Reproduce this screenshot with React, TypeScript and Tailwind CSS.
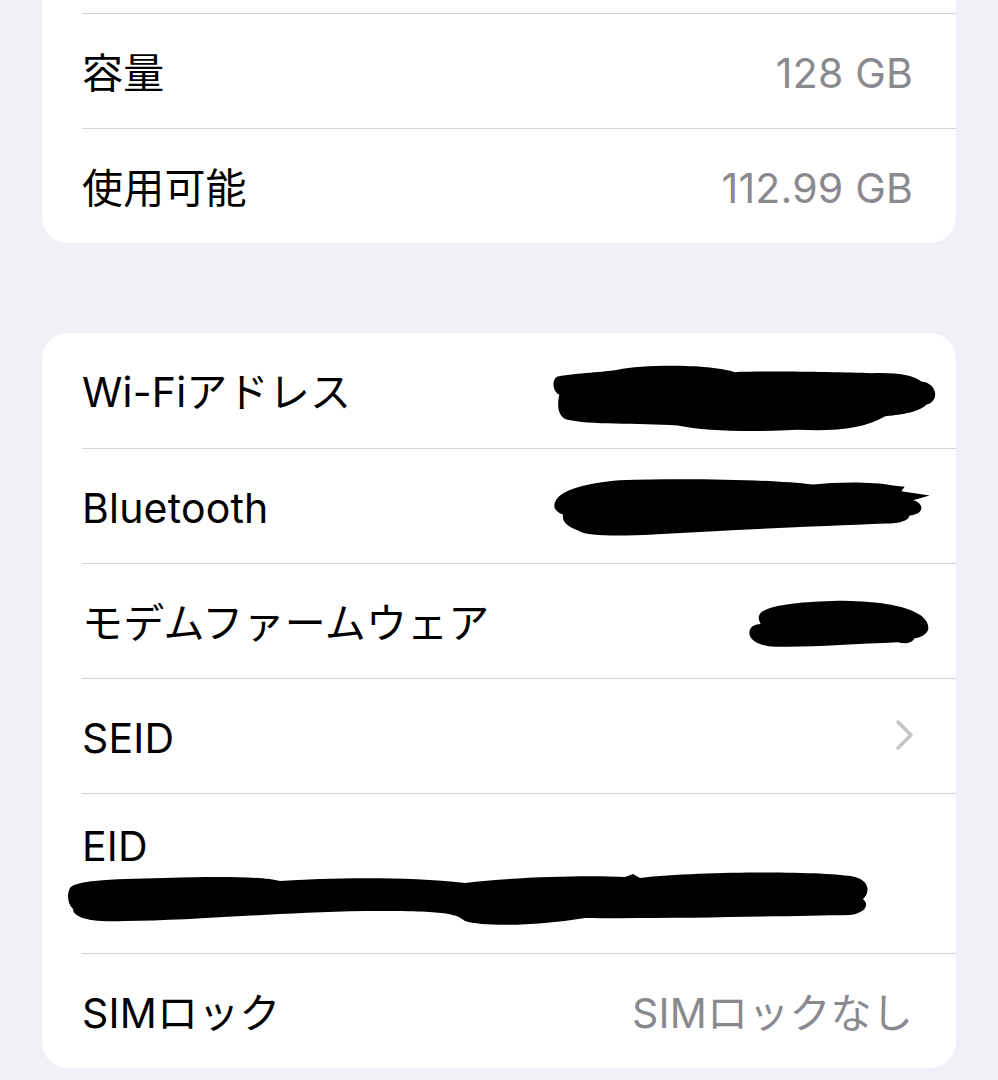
import React from 'react';

const font = { fontFamily: '"Inter", "Noto Sans CJK JP", sans-serif' };

const Row: React.FC<{ label: string; value?: React.ReactNode; first?: boolean }> = ({ label, value, first }) => (
  <div className={`h-[115px] flex items-center justify-between pr-[43px] pt-[3px] ${first ? '' : 'border-t border-[#d4d4d8]'}`}>
    <span className="text-black">{label}</span>
    {value}
  </div>
);

const Gray: React.FC<{ children: React.ReactNode }> = ({ children }) => (
  <span className="text-[#8a8a8e]">{children}</span>
);

const WifiBlob = () => (
  <svg width="387" height="71" viewBox="40 35 1160 212" className="mr-[-25px] mt-[12px]">
    <path
      d="M 60 75 C 120 65, 200 62, 240 55 C 320 38, 520 38, 590 62 C 700 58, 900 62, 1000 65 C 1080 62, 1130 72, 1150 90 C 1200 95, 1205 150, 1165 160 C 1140 185, 1080 190, 1040 195 C 980 230, 900 240, 780 235 C 650 242, 500 240, 420 222 C 300 215, 150 220, 90 205 C 55 195, 60 150, 65 130 C 40 115, 45 80, 60 75 Z"
      fill="#000"
    />
  </svg>
);

const BtBlob = () => (
  <svg width="380" height="62" viewBox="50 380 1140 185" className="mr-[-20px] mt-[-2px]">
    <path
      d="M 60 450 C 80 420, 150 400, 250 392 C 450 385, 700 390, 830 405 C 900 398, 1000 395, 1070 408 L 1105 412 L 1095 425 L 1180 438 L 1130 452 C 1165 460, 1165 495, 1120 498 C 1115 515, 1090 522, 1050 522 C 850 530, 600 540, 350 555 C 250 560, 150 560, 130 545 C 100 535, 75 520, 80 495 C 50 485, 50 465, 60 450 Z"
      fill="#000"
    />
  </svg>
);

const ModemBlob = () => (
  <svg width="185" height="50" viewBox="630 750 555 150" className="mr-[-20px] mt-[2px]">
    <path
      d="M 670 790 C 700 765, 800 758, 900 755 C 1000 755, 1100 765, 1150 800 C 1185 830, 1175 860, 1130 868 C 1120 885, 1100 885, 1080 880 C 950 885, 820 895, 720 893 C 680 895, 640 880, 635 858 C 630 835, 650 825, 668 825 C 660 810, 660 800, 670 790 Z"
      fill="#000"
    />
  </svg>
);

const EidBlob = () => (
  <svg width="805" height="57" viewBox="0 0 805 57" className="ml-[-17px] mt-[2px]">
    <path
      d="M 5 17 C 10 10, 40 8, 100 7 C 160 5, 200 6, 215 10 C 260 7, 340 5, 400 12 C 450 6, 520 4, 560 6 L 568 3 L 575 7 C 640 0, 760 0, 790 6 C 805 10, 805 22, 798 28 C 805 34, 800 42, 785 44 C 720 45, 600 48, 520 47 C 470 55, 420 56, 400 50 C 390 42, 380 40, 300 40 C 200 42, 120 50, 60 50 C 20 52, 8 45, 8 38 C 2 32, 2 22, 5 17 Z"
      fill="#000"
    />
  </svg>
);

const Chevron = () => (
  <svg width="20" height="32" viewBox="0 0 20 32" className="mr-[-2px] mt-[-6px]">
    <path d="M 3 3 L 16 16 L 3 29" fill="none" stroke="#c4c4c8" strokeWidth="3.5" strokeLinecap="round" strokeLinejoin="round" />
  </svg>
);

export default function App() {
  return (
    <div className="min-h-[1080px] w-[998px] bg-[#f0f0f6] text-[41px] leading-[46px] tracking-[0.2px]" style={font}>
      {/* Storage card (top continues above the screen) */}
      <div className="mx-[42px] bg-white rounded-b-[26px] pl-[40px]">
        <div className="h-[13px]" />
        <Row label="容量" value={<Gray>128 GB</Gray>} />
        <Row label="使用可能" value={<Gray>112.99 GB</Gray>} />
      </div>

      {/* Network card */}
      <div className="mx-[42px] mt-[90px] bg-white rounded-[26px] pl-[40px]">
        <Row first label="Wi-Fiアドレス" value={<WifiBlob />} />
        <Row label="Bluetooth" value={<BtBlob />} />
        <Row label="モデムファームウェア" value={<ModemBlob />} />
        <Row label="SEID" value={<Chevron />} />
        <div className="h-[160px] border-t border-[#d4d4d8] pt-[29px] flex flex-col">
          <span className="text-black">EID</span>
          <EidBlob />
        </div>
        <Row label="SIMロック" value={<Gray>SIMロックなし</Gray>} />
      </div>
    </div>
  );
}
